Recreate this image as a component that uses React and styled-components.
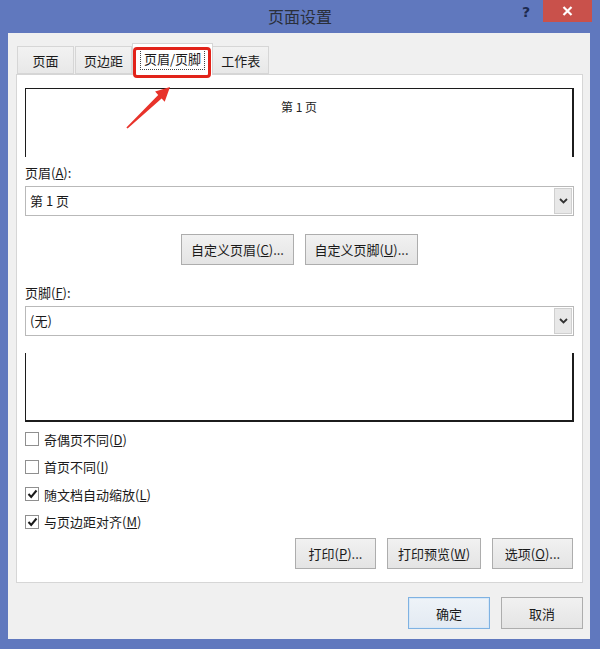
import React from "react";
import styled, { createGlobalStyle } from "styled-components";

const GlobalStyle = createGlobalStyle`
  * { box-sizing: border-box; }
  html, body { margin: 0; padding: 0; background: #6078be; }
  body {
    font-family: "Noto Sans CJK SC", "Microsoft YaHei", sans-serif;
    font-size: 13px;
    color: #1a1a1a;
  }
`;

const Window = styled.div`
  position: relative;
  width: 600px;
  height: 649px;
  display: flex;
  flex-direction: column;
  padding-bottom: 10px;
  background: #6078be;
  overflow: hidden;
`;

const TitleBar = styled.div`
  height: 33px;
  display: grid;
  grid-template-columns: 1fr auto 1fr;
  align-items: center;
`;

const Title = styled.div`
  grid-column: 2;
  font-size: 16px;
  color: #2a2f3a;
  padding-bottom: 1px;
`;

const TitleButtons = styled.div`
  grid-column: 3;
  align-self: start;
  display: flex;
  justify-content: flex-end;
  align-items: flex-start;
  padding-right: 8px;
`;

const Help = styled.div`
  font-family: "DejaVu Sans", sans-serif;
  font-weight: bold;
  font-size: 14px;
  color: #1d2a4f;
  margin: 4px 13px 0 0;
`;

const Close = styled.div`
  width: 49px;
  height: 22px;
  background: #c9514b;
  display: flex;
  align-items: center;
  justify-content: center;
`;

const Client = styled.div`
  flex: 1;
  margin: 0 10px 0 8px;
  background: #f0f0f0;
  padding: 10px 7px 10px 8px;
  display: flex;
  flex-direction: column;
`;

const TabStrip = styled.div`
  height: 31px;
  display: flex;
  align-items: flex-end;
  padding-left: 1px;
  position: relative;
  z-index: 1;
`;

const Tab = styled.div`
  min-width: 57px;
  height: ${(p) => (p.$active ? "32px" : "28px")};
  margin: ${(p) => (p.$active ? "0 -1px -1px -1px" : "0 1px 0 0")};
  padding: ${(p) => (p.$active ? "0 8px 2px" : "0 8px")};
  display: flex;
  align-items: center;
  justify-content: center;
  background: ${(p) => (p.$active ? "#ffffff" : "linear-gradient(#f2f2f2, #e8e8e8)")};
  border: 1px solid #d6d6d6;
  border-bottom: ${(p) => (p.$active ? "none" : "1px solid #d6d6d6")};
  position: relative;
  z-index: ${(p) => (p.$active ? 2 : 1)};
`;

const Focus = styled.span`
  padding: 1px 3px;
  outline: 1px dotted #444;
  outline-offset: 0;
`;

const Panel = styled.div`
  height: 509px;
  background: #ffffff;
  border: 1px solid #d6d6d6;
  padding: 13px 8px 13px 8px;
  display: flex;
  flex-direction: column;
`;

const Preview = styled.div`
  height: 69px;
  margin-top: ${(p) => p.$mt || 0}px;
  border-style: solid;
  border-color: #1c1c1c;
  border-width: ${(p) => (p.$top ? "1px 2px 0 1px" : "0 2px 2px 1px")};
  display: flex;
  justify-content: center;
  padding-top: 9px;
  font-size: 12px;
  color: #222;
`;

const Label = styled.div`
  line-height: 17px;
  margin-top: ${(p) => p.$mt}px;
  margin-bottom: 4.5px;
`;

const Select = styled.div`
  height: 30px;
  display: flex;
  border: 1px solid #b9b9b9;
  background: #fff;
`;

const SelectText = styled.div`
  flex: 1;
  display: flex;
  align-items: center;
  padding-left: 4px;
`;

const SelectArrow = styled.div`
  width: 18px;
  margin: 1px;
  background: #e8e8e8;
  border: 1px solid #cfcfcf;
  display: flex;
  align-items: center;
  justify-content: center;
`;

const CenterRow = styled.div`
  margin-top: 18px;
  display: flex;
  justify-content: center;
  gap: 11px;
`;

const RightRow = styled.div`
  margin-top: ${(p) => p.$mt}px;
  display: flex;
  justify-content: flex-end;
  gap: 11px;
  padding-right: ${(p) => p.$pr || 0}px;
`;

const Button = styled.div`
  width: ${(p) => p.$w}px;
  height: ${(p) => p.$h || 31}px;
  display: flex;
  align-items: center;
  justify-content: center;
  border: 1px solid ${(p) => (p.$default ? "#7fb2e2" : "#adadad")};
  background: ${(p) =>
    p.$default ? "linear-gradient(#eef3f8, #e3eaf2)" : "linear-gradient(#f1f1f1, #e4e4e4)"};
  box-shadow: ${(p) => (p.$default ? "inset 0 0 0 1px #d8e8f7" : "none")};
  color: #1a1a1a;
`;

const Checks = styled.div`
  margin-top: 4px;
  display: flex;
  flex-direction: column;
`;

const CheckRow = styled.div`
  height: 27.5px;
  display: flex;
  align-items: center;
  gap: 5px;
`;

const Box = styled.div`
  width: 14px;
  height: 14px;
  border: 1px solid #8f8f8f;
  background: #fff;
  display: flex;
  align-items: center;
  justify-content: center;
`;

const Footer = styled.div`
  margin-top: 14px;
  display: flex;
  justify-content: flex-end;
  gap: 11px;
`;

const Highlight = styled.div`
  position: absolute;
  z-index: 5;
  left: 133px;
  top: 47px;
  width: 78px;
  height: 31px;
  border: 3px solid #e2231a;
  border-radius: 4px;
  pointer-events: none;
`;

const Arrow = styled.svg`
  position: absolute;
  z-index: 5;
  left: 120px;
  top: 82px;
`;

const Key = ({ k }) => (
  <>
    (<u>{k}</u>)
  </>
);

const Chevron = () => (
  <svg width="9" height="6" viewBox="0 0 9 6">
    <path d="M1 1 L4.5 4.5 L8 1" fill="none" stroke="#333" strokeWidth="1.8" />
  </svg>
);

const Check = ({ on, children }) => (
  <CheckRow>
    <Box>
      {on && (
        <svg width="11" height="10" viewBox="0 0 11 10">
          <path d="M1.5 5 L4.2 8 L9.5 1.5" fill="none" stroke="#1a1a1a" strokeWidth="2" />
        </svg>
      )}
    </Box>
    <span>{children}</span>
  </CheckRow>
);

export default function App() {
  return (
    <>
      <GlobalStyle />
      <Window>
        <TitleBar>
          <Title>页面设置</Title>
          <TitleButtons>
            <Help>?</Help>
            <Close>
              <svg width="11" height="10" viewBox="0 0 11 10">
                <path d="M1.5 1 L9.5 9 M9.5 1 L1.5 9" stroke="#fff" strokeWidth="2.2" />
              </svg>
            </Close>
          </TitleButtons>
        </TitleBar>
        <Client>
          <TabStrip>
            <Tab>页面</Tab>
            <Tab>页边距</Tab>
            <Tab $active>
              <Focus>页眉/页脚</Focus>
            </Tab>
            <Tab>工作表</Tab>
          </TabStrip>
          <Panel>
            <Preview $top>第 1 页</Preview>
            <Label $mt={7}>
              页眉<Key k="A" />:
            </Label>
            <Select>
              <SelectText>第 1 页</SelectText>
              <SelectArrow>
                <Chevron />
              </SelectArrow>
            </Select>
            <CenterRow>
              <Button $w={113}>
                自定义页眉<Key k="C" />...
              </Button>
              <Button $w={113}>
                自定义页脚<Key k="U" />...
              </Button>
            </CenterRow>
            <Label $mt={19.5}>
              页脚<Key k="F" />:
            </Label>
            <Select>
              <SelectText>(无)</SelectText>
              <SelectArrow>
                <Chevron />
              </SelectArrow>
            </Select>
            <Preview $mt={17} />
            <Checks>
              <Check>
                奇偶页不同<Key k="D" />
              </Check>
              <Check>
                首页不同<Key k="I" />
              </Check>
              <Check on>
                随文档自动缩放<Key k="L" />
              </Check>
              <Check on>
                与页边距对齐<Key k="M" />
              </Check>
            </Checks>
            <RightRow $mt={2} $pr={1}>
              <Button $w={81}>
                打印<Key k="P" />...
              </Button>
              <Button $w={94}>
                打印预览<Key k="W" />
              </Button>
              <Button $w={81}>
                选项<Key k="O" />...
              </Button>
            </RightRow>
          </Panel>
          <Footer>
            <Button $w={82} $h={32} $default>
              确定
            </Button>
            <Button $w={82} $h={32}>
              取消
            </Button>
          </Footer>
        </Client>
        <Highlight />
        <Arrow width="56" height="50" viewBox="0 0 56 50">
          <polygon
            points="6.4,45.4 38.2,12.9 35.1,9.6 50,5 44.7,19.7 41.6,16.5 7.6,46.6"
            fill="#e8322a"
          />
        </Arrow>
      </Window>
    </>
  );
}
